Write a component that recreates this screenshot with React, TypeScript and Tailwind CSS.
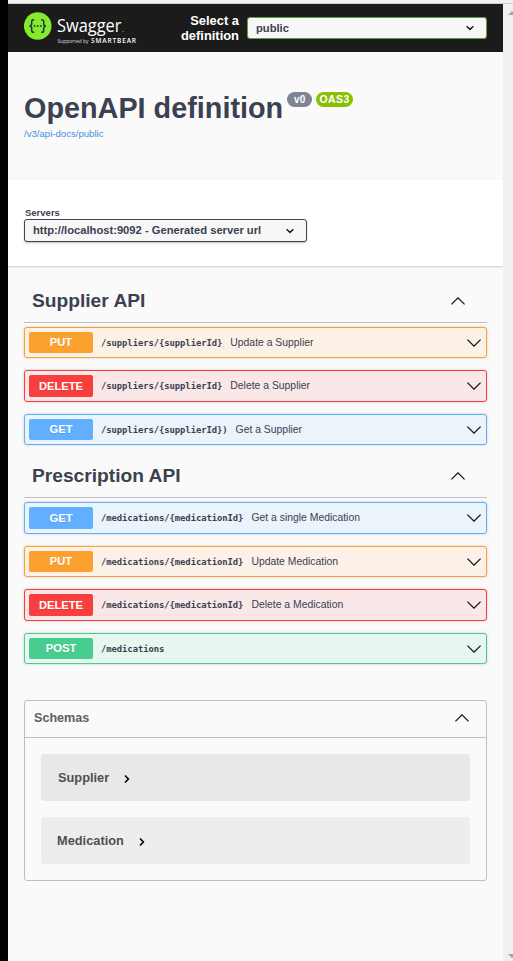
import { clsx } from "clsx";

type Method = "PUT" | "DELETE" | "GET" | "POST";

interface Operation {
  method: Method;
  path: string;
  summary?: string;
  tall?: boolean;
}

const rowColors: Record<Method, string> = {
  PUT: "border-[#fca130] bg-[#fbf1e6]",
  DELETE: "border-[#f93e3e] bg-[#fae7e7]",
  GET: "border-[#61affe] bg-[#ebf3fb]",
  POST: "border-[#49cc90] bg-[#e8f6f0]",
};

const badgeColors: Record<Method, string> = {
  PUT: "bg-[#fca130]",
  DELETE: "bg-[#f93e3e]",
  GET: "bg-[#61affe]",
  POST: "bg-[#49cc90]",
};

const supplierOps: Operation[] = [
  { method: "PUT", path: "/suppliers/{supplierId}", summary: "Update a Supplier" },
  { method: "DELETE", path: "/suppliers/{supplierId}", summary: "Delete a Supplier", tall: true },
  { method: "GET", path: "/suppliers/{supplierId})", summary: "Get a Supplier" },
];

const prescriptionOps: Operation[] = [
  { method: "GET", path: "/medications/{medicationId}", summary: "Get a single Medication", tall: true },
  { method: "PUT", path: "/medications/{medicationId}", summary: "Update Medication" },
  { method: "DELETE", path: "/medications/{medicationId}", summary: "Delete a Medication", tall: true },
  { method: "POST", path: "/medications" },
];

function WideChevron({ up = false }: { up?: boolean }) {
  return (
    <svg width="14" height="8" viewBox="0 0 14 8" fill="none" stroke="#111" strokeWidth="1.3" className="shrink-0">
      <path d={up ? "M.4 7.4 7 .9l6.6 6.5" : "M.4.6 7 7.1 13.6.6"} />
    </svg>
  );
}

function SelectChevron() {
  return (
    <svg width="10" height="8" viewBox="0 0 10 8" fill="none" stroke="#1c1c1c" strokeWidth="1.5" className="shrink-0">
      <path d="M1.6 2.2 5 5.4 8.4 2.2" />
    </svg>
  );
}

function SwaggerLogo() {
  return (
    <svg width="120" height="38" viewBox="0 0 120 38" className="shrink-0" fontFamily="'Open Sans', sans-serif">
      <circle cx="13.7" cy="15" r="13.8" fill="#85ea2d" />
      <g fill="none" stroke="#173647" strokeWidth="1.5">
        <path d="M10.2 8.8H9.5Q7.7 8.8 7.7 10.6v2q0 2.2-2.2 2.4 2.2.2 2.2 2.4v2q0 1.8 1.8 1.8h.7" />
        <path d="M17.2 8.8h.7q1.8 0 1.8 1.8v2q0 2.2 2.2 2.4-2.2.2-2.2 2.4v2q0 1.8-1.8 1.8h-.7" />
      </g>
      <g fill="#173647">
        <circle cx="10.5" cy="15" r="0.9" />
        <circle cx="13.7" cy="15" r="0.9" />
        <circle cx="16.9" cy="15" r="0.9" />
      </g>
      <text x="33" y="20.6" fontSize="18" fill="#fff" textLength="64.5" lengthAdjust="spacingAndGlyphs">Swagger</text>
      <rect x="98.5" y="20" width="1.6" height="0.8" fill="#888" />
      <text x="33.5" y="32" fontSize="5" fill="#ddd" textLength="31" lengthAdjust="spacingAndGlyphs">Supported by</text>
      <text x="67" y="32" fontSize="6.5" fontWeight="600" fill="#fff" textLength="45">SMARTBEAR</text>
    </svg>
  );
}

function OperationRow({ op }: { op: Operation }) {
  return (
    <div
      className={clsx(
        "flex items-center rounded-[3px] border py-1 pr-[5px] pl-1 shadow-[0_0_3px_rgba(0,0,0,0.19)]",
        op.tall ? "h-8" : "h-[31px]",
        rowColors[op.method],
      )}
    >
      <span
        className={clsx(
          "flex w-16 items-center justify-center self-stretch rounded-[2px] pt-px text-[11.2px] leading-none font-bold text-white [text-shadow:0_1px_0_rgba(0,0,0,0.1)]",
          badgeColors[op.method],
        )}
      >
        {op.method}
      </span>
      <span className="ml-2 pt-px font-['DejaVu_Sans_Mono',monospace] text-[8.9px] leading-none font-bold tracking-[-0.07px] whitespace-nowrap">
        {op.path}
      </span>
      <span className="ml-2 flex-1 pt-px text-[10.4px] leading-none whitespace-nowrap">{op.summary}</span>
      <WideChevron up={false} />
    </div>
  );
}

function TagSection({ name, ops }: { name: string; ops: Operation[] }) {
  return (
    <section>
      <div className="flex h-[43px] items-center justify-between border-b border-[#bdbec1] pr-[22px] pb-px pl-2">
        <h3 className="text-[19.2px] leading-none font-bold">{name}</h3>
        <WideChevron up />
      </div>
      <div className="mt-1 flex flex-col gap-3">
        {ops.map((op) => (
          <OperationRow key={op.method} op={op} />
        ))}
      </div>
    </section>
  );
}

function SchemaRow({ name, first = false }: { name: string; first?: boolean }) {
  return (
    <div
      className={clsx(
        "flex h-[47px] items-center rounded-[3px] pt-px text-[12.8px] font-bold text-[#505050]",
        first ? "bg-[#e8e8e8] pl-[17px]" : "bg-[#ededed] pl-4",
      )}
    >
      {name}
      <svg width="8" height="10" viewBox="0 0 8 10" fill="none" stroke="#000" strokeWidth="1.6" className="mt-px ml-[14px]">
        <path d="M2 1.5 5.4 5 2 8.5" />
      </svg>
    </div>
  );
}

export default function App() {
  return (
    <div className="flex h-[961px] w-[513px] overflow-hidden bg-black pl-2 font-['Liberation_Sans',Arial,sans-serif] text-[#3b4151]">
      <div className="flex flex-1 flex-col">
        <div className="h-1 shrink-0 border-b border-[#cfcfcf] bg-[#f0f0f0]" />
        <div className="flex flex-1">
          <main className="flex w-[495px] flex-col bg-[#fafafa]">
            <header className="flex h-12 shrink-0 items-start bg-[#1b1b1b] pr-4 pl-4">
              <div className="pt-[7px]">
                <SwaggerLogo />
              </div>
              <div className="flex flex-1 items-center justify-end gap-2 pt-[9px]">
                <span className="w-[70px] text-right text-[12.9px] leading-[15px] font-bold text-white">
                  Select a definition
                </span>
                <div className="-mt-px flex h-[22px] w-60 items-center justify-between rounded-[3px] border border-[#62a03f] bg-[#f7f7f7] pt-px pr-[11px] pl-2 text-[11.2px] font-bold">
                  public
                  <SelectChevron />
                </div>
              </div>
            </header>

            <section className="h-32 shrink-0 px-4 pt-[39px]">
              <div className="flex items-start gap-1">
                <h2 className="text-[28.8px] leading-[34px] font-bold whitespace-nowrap">OpenAPI definition</h2>
                <span className="mt-[1px] flex h-[15px] w-[25px] items-center justify-center rounded-full bg-[#7d8492] text-[10px] font-bold text-white">
                  v0
                </span>
                <span className="mt-[1px] flex h-[15px] w-[37px] items-center justify-center rounded-full bg-[#89bf04] text-[10.4px] font-bold tracking-[0.5px] text-white">
                  OAS3
                </span>
              </div>
              <a className="mt-[3px] block text-[9.6px] leading-[12px] text-[#4990e2]">/v3/api-docs/public</a>
            </section>

            <section className="h-[86px] shrink-0 bg-white px-4 pt-[27px] shadow-[0_1px_2px_rgba(0,0,0,0.18)]">
              <div className="pl-px text-[9.5px] leading-[12px] font-bold">Servers</div>
              <div className="flex h-[23px] w-[283px] items-center justify-between rounded-[3px] border border-[#41444e] bg-[#f7f7f7] pr-[11px] pl-2 text-[11.2px] font-bold shadow-[0_1px_2px_rgba(0,0,0,0.25)]">
                http://localhost:9092 - Generated server url
                <SelectChevron />
              </div>
            </section>

            <div className="flex flex-col px-4 pt-[14px]">
              <TagSection name="Supplier API" ops={supplierOps} />
              <div className="h-[10px]" />
              <TagSection name="Prescription API" ops={prescriptionOps} />

              <section className="mt-9 h-[181px] rounded-[3px] border border-[#bdbec1]">
                <div className="flex h-[37px] items-center justify-between border-b border-[#bdbec1] pr-[17px] pb-[2px] pl-[9px]">
                  <h4 className="text-[12.6px] leading-none font-bold text-[#606060]">Schemas</h4>
                  <WideChevron up />
                </div>
                <div className="flex flex-col gap-4 p-4">
                  <SchemaRow name="Supplier" first />
                  <SchemaRow name="Medication" />
                </div>
              </section>
            </div>
          </main>

          <aside className="flex w-[10px] flex-col items-end justify-between overflow-hidden bg-[#f0f0f0] pt-[7px] pb-[3px]">
            <svg width="5" height="4" viewBox="0 0 5 4" fill="#a3a3a3">
              <path d="M0 4 4 0 5 1V4Z" />
            </svg>
            <svg width="5" height="4" viewBox="0 0 5 4" fill="#a3a3a3">
              <path d="M0 0 4 4 5 3V0Z" />
            </svg>
          </aside>
        </div>
      </div>
    </div>
  );
}
